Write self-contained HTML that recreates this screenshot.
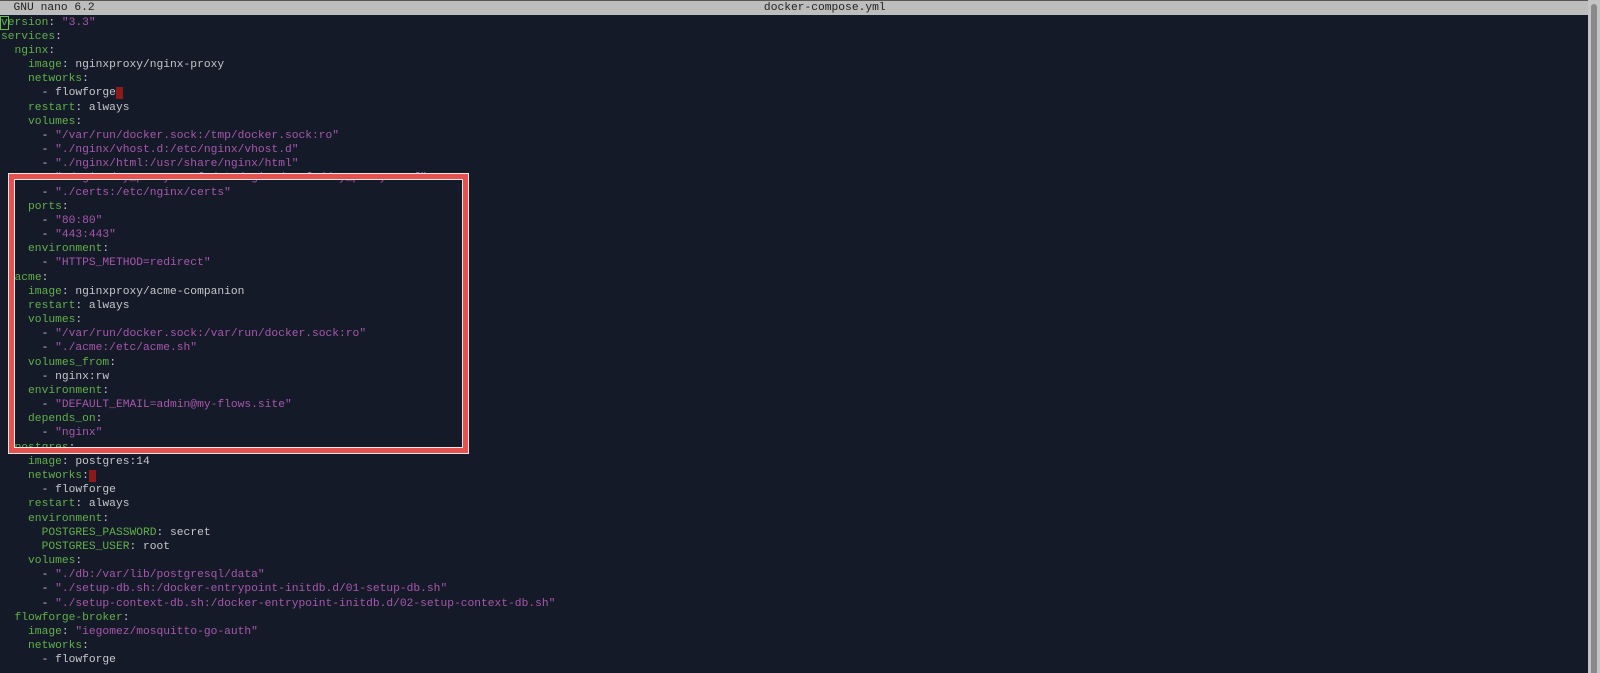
<!DOCTYPE html>
<html><head><meta charset="utf-8"><style>
html,body{margin:0;padding:0;width:1600px;height:673px;overflow:hidden;background:#141a27;}
#hdr{position:absolute;left:0;top:0;width:1588px;height:15px;background:#bdbdbd;border-top:1px solid #555;box-sizing:border-box;font:11.27px "Liberation Mono",monospace;color:#222;line-height:14px;white-space:pre;}
#sb{position:absolute;left:1588px;top:0;width:12px;height:673px;background:#c4c4c4;}
#sb div{position:absolute;left:3px;top:4px;width:6px;height:669px;background:#8a8a8a;border-radius:3px 3px 0 0;}
pre{position:absolute;left:1px;top:15.5px;margin:0;font:11.27px "Liberation Mono",monospace;line-height:14.17px;color:#c4c7cc;}
.k{color:#62b04a}.s{color:#a857ad}
.cur{background:#8b1a1a}
.box{position:absolute;left:8px;top:173px;width:461px;height:281px;box-sizing:border-box;border:1px solid #e8e8e8;}
.box .r{position:absolute;left:0;top:0;right:0;bottom:0;border:5px solid #e5514f;}
.box .r .w{position:absolute;left:0;top:0;right:0;bottom:0;border:1px solid #e8e8e8;}
</style></head><body>
<div id="hdr">  GNU nano 6.2                                                                                                   docker-compose.yml</div>
<div id="sb"><div></div></div>
<pre><span class="k" style="outline:1px solid #6abf4b">v</span><span class="k">ersion</span>: <span class="s">"3.3"</span>
<span class="k">services</span>:
  <span class="k">nginx</span>:
    <span class="k">image</span>: nginxproxy/nginx-proxy
    <span class="k">networks</span>:
      - flowforge<span class="cur"> </span>
    <span class="k">restart</span>: always
    <span class="k">volumes</span>:
      - <span class="s">"/var/run/docker.sock:/tmp/docker.sock:ro"</span>
      - <span class="s">"./nginx/vhost.d:/etc/nginx/vhost.d"</span>
      - <span class="s">"./nginx/html:/usr/share/nginx/html"</span>
      - <span class="s">"./nginx/my_proxy.conf:/etc/nginx/conf.d/my_proxy.conf"</span>
      - <span class="s">"./certs:/etc/nginx/certs"</span>
    <span class="k">ports</span>:
      - <span class="s">"80:80"</span>
      - <span class="s">"443:443"</span>
    <span class="k">environment</span>:
      - <span class="s">"HTTPS_METHOD=redirect"</span>
  <span class="k">acme</span>:
    <span class="k">image</span>: nginxproxy/acme-companion
    <span class="k">restart</span>: always
    <span class="k">volumes</span>:
      - <span class="s">"/var/run/docker.sock:/var/run/docker.sock:ro"</span>
      - <span class="s">"./acme:/etc/acme.sh"</span>
    <span class="k">volumes_from</span>:
      - nginx:rw
    <span class="k">environment</span>:
      - <span class="s">"DEFAULT_EMAIL=admin@my-flows.site"</span>
    <span class="k">depends_on</span>:
      - <span class="s">"nginx"</span>
  <span class="k">postgres</span>:
    <span class="k">image</span>: postgres:14
    <span class="k">networks</span>:<span class="cur"> </span>
      - flowforge
    <span class="k">restart</span>: always
    <span class="k">environment</span>:
      <span class="k">POSTGRES_PASSWORD</span>: secret
      <span class="k">POSTGRES_USER</span>: root
    <span class="k">volumes</span>:
      - <span class="s">"./db:/var/lib/postgresql/data"</span>
      - <span class="s">"./setup-db.sh:/docker-entrypoint-initdb.d/01-setup-db.sh"</span>
      - <span class="s">"./setup-context-db.sh:/docker-entrypoint-initdb.d/02-setup-context-db.sh"</span>
  <span class="k">flowforge-broker</span>:
    <span class="k">image</span>: <span class="s">"iegomez/mosquitto-go-auth"</span>
    <span class="k">networks</span>:
      - flowforge</pre>
<div class="box"><div class="r"><div class="w"></div></div></div>
</body></html>
